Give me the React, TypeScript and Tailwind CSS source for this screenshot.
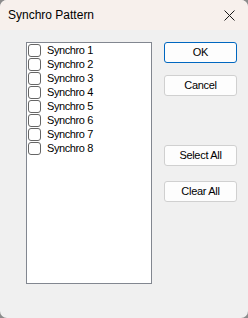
const items = ["Synchro 1", "Synchro 2", "Synchro 3", "Synchro 4", "Synchro 5", "Synchro 6", "Synchro 7", "Synchro 8"];

const font = { fontFamily: '"Liberation Sans", Arial, sans-serif' };

function Btn({ label, primary }: { label: string; primary?: boolean }) {
  return (
    <button
      className={`h-[21px] w-[73px] rounded-[3px] bg-[#fdfdfd] text-[11px] tracking-[-0.3px] text-black ${
        primary ? "border border-[#0067c0]" : "border border-[#d0d0d0]"
      }`}
    >
      {label}
    </button>
  );
}

export default function App() {
  return (
    <div className="h-[318px] w-[248px] bg-[#8c8c8c]" style={font}>
      <div className="flex h-full w-full flex-col overflow-hidden rounded-[7px] bg-[#f0f0f0]">
        <div className="flex h-[30px] shrink-0 items-center justify-between bg-[#f7f0ec] pl-[8px] pr-[12px]">
          <span className="text-[12px] text-black">Synchro Pattern</span>
          <svg width="11" height="11" viewBox="0 0 11 11" className="mr-[1px]">
            <path d="M0.5 0.5L10.5 10.5M10.5 0.5L0.5 10.5" stroke="#1a1a1a" strokeWidth="1" />
          </svg>
        </div>
        <div className="flex pl-[26px] pt-[12px]">
          <div className="h-[242px] w-[126px] border border-[#828790] bg-white pl-[1px]">
            {items.map((it) => (
              <div key={it} className="flex h-[14px] items-center gap-[6px]">
                <span className="h-[13px] w-[13px] rounded-[3px] border border-[#666] bg-white" />
                <span className="text-[11px] leading-none tracking-[-0.4px] text-black">{it}</span>
              </div>
            ))}
          </div>
          <div className="ml-[12px] flex flex-col">
            <Btn label="OK" primary />
            <div className="h-[12px]" />
            <Btn label="Cancel" />
            <div className="h-[49px]" />
            <Btn label="Select All" />
            <div className="h-[15px]" />
            <Btn label="Clear All" />
          </div>
        </div>
      </div>
    </div>
  );
}
